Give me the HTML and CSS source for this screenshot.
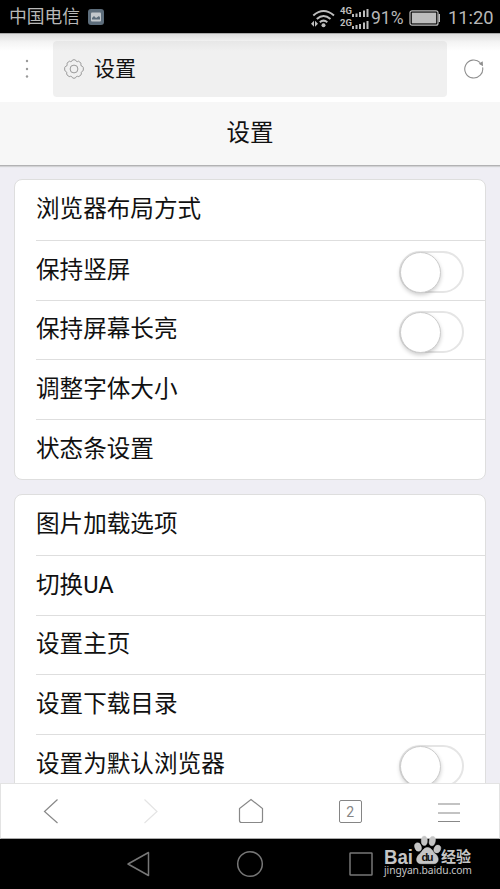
FILE: index.html
```
<!DOCTYPE html>
<html lang="zh-CN">
<head>
<meta charset="utf-8">
<title>设置</title>
<link rel="stylesheet" href="styles.css">
</head>
<body>
<div class="phone">
  <header class="status">
    <span class="carrier">中国电信</span>
    <svg class="shot" width="16" height="16" viewBox="0 0 16 16"><rect width="16" height="16" rx="3" fill="#5d6d7b"/><rect x="3" y="3.5" width="10" height="9" rx="1" fill="#c3c8cc"/><path d="M4 10.5V9l2-2 2 2 3-2 1 1.5v2z" fill="#5d6d7b"/></svg>
    <span class="grow"></span>
    <svg class="signals" width="60" height="28" viewBox="0 0 60 28">
      <g fill="none" stroke="#bdbdbd" stroke-width="2"><path d="M3.300 11.500Q13.500 2.500 24 11.500"/><path d="M6.800 15Q13.500 9 20.500 15"/><path d="M9.800 18.300Q13.500 15 17.300 18.300"/></g>
      <circle cx="13.500" cy="21.200" r="2" fill="#bdbdbd"/>
      <path d="M1 19.800l3-3v6zM8 19.800l-3-3v6z" fill="#bdbdbd"/>
      <g class="net" fill="#bdbdbd"><text x="30" y="10.300" textLength="12">4G</text><text x="30" y="21.600" textLength="12">2G</text></g>
      <path d="M42 10h2v3h-2zM45.500 9.500h2V13h-2zM49 8h2v5h-2zM53 6.500h2V13h-2zM56.500 5h2v8h-2zM42 22h2v3h-2zM45.500 21h2v4h-2zM49 20h2v5h-2zM53 18.500h2V25h-2zM56.500 17h2v8h-2z" fill="#bdbdbd"/>
    </svg>
    <span class="percent">91%</span>
    <svg class="battery" width="32" height="16" viewBox="0 0 32 16"><rect x="1" y=".8" width="28" height="14.400" rx="2" fill="none" stroke="#bdbdbd" stroke-width="1.200"/><rect x="2.800" y="2.600" width="24.400" height="10.800" fill="#bdbdbd"/><path d="M29.500 4h1.500v8h-1.500z" fill="#bdbdbd"/></svg>
    <span class="clock">11:20</span>
  </header>

  <div class="address">
    <svg class="dots" width="4" height="20" viewBox="0 0 4 20" fill="#999"><circle cx="2" cy="2" r="1.200"/><circle cx="2" cy="10" r="1.200"/><circle cx="2" cy="17.500" r="1.200"/></svg>
    <div class="field">
      <svg width="20" height="20" viewBox="0 0 20 20" fill="none" stroke="#999" stroke-linejoin="round"><circle cx="10" cy="10" r="3.900"/><path d="M10 .7Q12 .7 12.400 2.400Q13.200 3 14.600 2.200L17 4.200Q16.600 6 17.300 7Q19.300 7.600 19.300 8.500V11.500Q17.600 12.500 17.300 13.300Q17.500 15.300 17 15.900L14.800 17.600Q13.200 17 12.400 17.500Q11.800 19.300 10 19.300Q8.200 19.300 7.600 17.500Q6.800 17 5.200 17.600L3 15.900Q2.500 15.300 2.700 13.300Q2.400 12.500.7 11.500V8.500Q.7 7.600 2.700 7Q3.400 6 3 4.200L5.400 2.200Q6.800 3 7.600 2.400Q8 .7 10 .7Z"/></svg>
      <span>设置</span>
    </div>
    <svg class="reload" width="20" height="20" viewBox="0 0 20 20" fill="none" stroke="#8f8f8f" stroke-width="1.100"><path d="M18.600 8.300A9 9 0 1 1 16.200 3.700"/><path d="M15.800 4.800l2.400-1.500.2 3z" fill="#8f8f8f"/></svg>
  </div>

  <h1 class="title">设置</h1>

  <main class="settings">
    <section class="card">
      <div class="row">浏览器布局方式</div>
      <div class="row">保持竖屏<i class="switch"></i></div>
      <div class="row">保持屏幕长亮<i class="switch"></i></div>
      <div class="row">调整字体大小</div>
      <div class="row">状态条设置</div>
    </section>
    <section class="card">
      <div class="row">图片加载选项</div>
      <div class="row">切换UA</div>
      <div class="row">设置主页</div>
      <div class="row">设置下载目录</div>
      <div class="row">设置为默认浏览器<i class="switch"></i></div>
    </section>
  </main>

  <nav class="tools">
    <svg viewBox="0 0 26 26"><path d="M19.500 1.500L6.500 13.500l13 11.500"/></svg>
    <svg class="disabled" viewBox="0 0 26 26"><path d="M6.500 1.500l12.500 12L6.500 25"/></svg>
    <svg viewBox="0 0 26 26"><path d="M13 1.500L24.500 10.500V22.500Q24.500 24.500 22.500 24.500H3.500Q1.500 24.500 1.500 22.500V10.500Z"/></svg>
    <span class="tabs">2</span>
    <svg viewBox="0 0 26 26"><path d="M2 6h22M2 15h22M2 23.500h22"/></svg>
  </nav>

  <footer class="system">
    <svg viewBox="0 0 28 28"><path d="M23.500 2.500v23L3 14z"/></svg>
    <svg viewBox="0 0 28 28"><circle cx="14" cy="14" r="12.300"/></svg>
    <svg viewBox="0 0 28 28"><rect x="3" y="3" width="22" height="22" rx=".6"/></svg>
  </footer>

  <div class="watermark">
    <svg width="94" height="46" viewBox="0 0 94 46">
      <g fill="#c5c5c5" stroke="#d8d8d8" stroke-width=".5"><ellipse cx="35" cy="13" rx="3.200" ry="4.300" transform="rotate(-18 35 13)"/><ellipse cx="41.300" cy="6.700" rx="3" ry="4.700"/><ellipse cx="49.300" cy="7" rx="3" ry="4.700" transform="rotate(10 49.300 7)"/><ellipse cx="54.300" cy="15" rx="3.200" ry="4" transform="rotate(22 54.300 15)"/><path d="M44.500 13.500c4 0 5 4 8 6.500 4.500 4 3 9.700-1.500 9.700H38c-5 0-6-5.700-1.500-9.700 3-2.500 4-6.500 8-6.500z"/></g>
      <text class="bai" x="1" y="29.500" textLength="29" lengthAdjust="spacingAndGlyphs">Bai</text>
      <text class="du" x="38.500" y="27" textLength="12">du</text>
      <text class="exp" x="58" y="28" textLength="30">经验</text>
      <text class="site" x="1" y="40" textLength="88">jingyan.baidu.com</text>
    </svg>
  </div>
</div>
</body>
</html>
```
FILE: styles.css
```
* { box-sizing: border-box; }
body { margin: 0; font-family: Roboto, "Noto Sans CJK SC", sans-serif; color: #111; background: #000; }
svg { display: block; flex: none; }
.phone { position: relative; display: flex; flex-direction: column; width: 500px; height: 889px; overflow: hidden; }

.status { display: flex; align-items: center; height: 33px; flex: none; padding: 0 8px 0 9px; background: #000; color: #b8b8b8; white-space: nowrap; }
.carrier { width: 79px; font-size: 17.8px; line-height: 33px; }
.grow { flex: 1; }
.percent { width: 35px; margin-left: 1px; font-size: 17.5px; line-height: 36px; padding-top: 2px; }
.battery { margin-left: 3px; margin-top: 2px; }
.clock { width: 44px; margin-left: 7px; font-size: 18.3px; line-height: 36px; padding-top: 2px; }
.signals { margin-top: 2px; }
.net text { font: bold 9.500px Roboto, sans-serif; }

.address { display: flex; align-items: center; height: 69px; flex: none; padding: 1px 16px 0 25px; border-top: 1px solid #aaa; background: linear-gradient(#dedede, #f4f4f4 8px, #fff 17px); }
.field { display: flex; align-items: center; gap: 10px; width: 394px; height: 56px; margin: 0 17px 0 24px; padding-left: 11px; border-radius: 4px; background: linear-gradient(#e7e7e7, #f0f0f0 10px); font-size: 21px; line-height: 56px; }
.field span { padding-top: 0; }
.title { flex: none; height: 64px; margin: 0; border-bottom: 1px solid #b2b2b4; box-shadow: 0 1px 1px #d2d2d4; background: #f7f7f7; font-size: 23.500px; line-height: 62px; font-weight: 400; text-align: center; z-index: 1; }

.settings { flex: 1; min-height: 0; overflow: hidden; padding: 13px 14px 0; background: #efeef4; }
.card { height: 301px; margin-bottom: 14px; padding-left: 21px; border: 1px solid #dedede; border-width: 1.500px; border-radius: 8px; background: #fff; }
.row { display: flex; align-items: center; justify-content: space-between; height: 59.750px; padding: 0 21px 1px 0; font-size: 23.600px; line-height: 56px; white-space: nowrap; }
.row + .row { border-top: 1px solid #dedede; }
.switch { position: relative; flex: none; width: 65px; height: 42px; margin-top: 5px; border: 2px solid #e5e5e5; border-radius: 21px; background: #fff; }
.switch::after { content: ""; position: absolute; left: -1px; top: -1px; width: 39px; height: 39px; border: 1px solid #ccc; border-radius: 50%; background: #fff; box-shadow: 0 2px 4px rgba(0, 0, 0, .2); }

.tools { display: flex; align-items: center; justify-content: space-around; flex: none; height: 56px; border: 1px solid #e3e3e3; border-bottom-color: #aaa; background: #fff; }
.tools svg { width: 26px; height: 26px; fill: none; stroke: #888; stroke-width: 1.200; }
.tools .disabled { stroke: #e4e4e4; }
.tabs { width: 23px; height: 23px; border: 1px solid #858585; border-radius: 2px; color: #858585; font-size: 14px; line-height: 22px; text-align: center; }

.system { display: flex; align-items: center; justify-content: center; gap: 83px; flex: none; height: 50px; background: #000; }
.system svg { width: 28px; height: 28px; fill: none; stroke: #777; stroke-width: 1.500; stroke-linejoin: round; }

.watermark { position: absolute; left: 383px; top: 834px; }
.watermark text { fill: #c5c5c5; font-family: "Noto Sans", "Noto Sans CJK SC", sans-serif; }
.watermark .bai { font-family: "Liberation Sans", sans-serif; font-weight: bold; font-size: 20px; }
.watermark .du { fill: #111; font-family: "Liberation Sans", sans-serif; font-weight: bold; font-size: 11px; }
.watermark .exp { font-family: "Noto Sans CJK SC", sans-serif; font-weight: bold; font-size: 15px; }
.watermark .site { font-size: 10.300px; }
```
